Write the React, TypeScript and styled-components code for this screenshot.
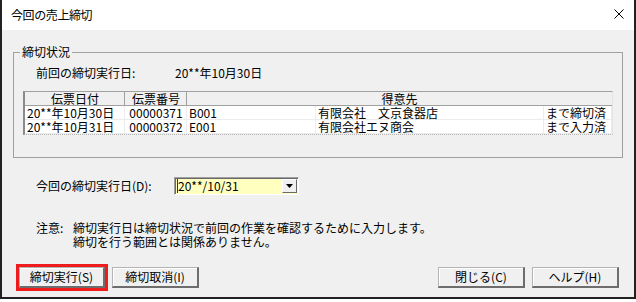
import styled, { createGlobalStyle } from "styled-components";

const GlobalStyle = createGlobalStyle`
  html, body {
    margin: 0;
    padding: 0;
    background: #ffffff;
  }
  body {
    font-family: "Noto Sans CJK JP", "Noto Sans", sans-serif;
    font-size: 12px;
    color: #000000;
  }
`;

const Window = styled.div`
  width: 636px;
  height: 299px;
  box-sizing: border-box;
  border-left: 2px solid #222222;
  border-right: 2px solid #222222;
  border-bottom: 2px solid #222222;
  background: #f0f0f0;
  display: flex;
  flex-direction: column;
`;

const TitleBar = styled.div`
  height: 30px;
  flex: none;
  background: #ffffff;
  display: flex;
  align-items: center;
  justify-content: space-between;
  padding: 0 10px 0 9px;
`;

const Title = styled.div`
  font-size: 12px;
  line-height: 14px;
  letter-spacing: -0.4px;
`;

const CloseBtn = styled.div`
  width: 10px;
  height: 10px;
  margin-top: -2px;
  display: flex;
`;

const Content = styled.div`
  flex: 1;
  display: flex;
  flex-direction: column;
  padding: 22px 11px 0 11px;
`;

const GroupBox = styled.div`
  position: relative;
  height: 106px;
  box-sizing: border-box;
  border: 1px solid #a0a0a0;
  padding: 13px 0 0 9px;
`;

const Legend = styled.div`
  position: absolute;
  top: -8px;
  left: 6px;
  padding: 0 2px;
  background: #f0f0f0;
  line-height: 14px;
`;

const InfoRow = styled.div`
  display: flex;
  line-height: 14px;
  margin-left: 13px;
`;

const InfoLabel = styled.div`
  width: 139px;
`;

const TableWrap = styled.div`
  margin-top: 11px;
  width: 590px;
  box-sizing: border-box;
  border-top: 1px solid #a0a0a0;
  border-left: 2px solid #8a8a8a;
  border-right: 1px solid #e3e3e3;
  border-bottom: 1px dotted #b4b4b4;
`;

const Table = styled.table`
  width: 100%;
  border-collapse: collapse;
  table-layout: fixed;
`;

const HeadCell = styled.th<{ $last?: boolean }>`
  font-weight: normal;
  height: 14px;
  padding: 0;
  line-height: 14px;
  background: #f0f0f0;
  box-shadow: ${({ $last }) =>
    $last ? "inset 0 -1px 0 #a0a0a0" : "inset -1px -1px 0 #a0a0a0"};
  text-align: center;
  white-space: nowrap;
`;

const Cell = styled.td<{ $align?: string }>`
  height: 14px;
  padding: 0 2px;
  line-height: 14px;
  background: #ffffff;
  box-shadow: inset -1px -1px 0 #ececec;
  text-align: ${({ $align }) => $align || "left"};
  white-space: nowrap;
`;

const ComboRow = styled.div`
  display: flex;
  align-items: center;
  margin-top: 19px;
  margin-left: 23px;
  height: 18px;
`;

const ComboLabel = styled.div`
  width: 138px;
  line-height: 14px;
`;

const Combo = styled.div`
  width: 125px;
  height: 18px;
  box-sizing: border-box;
  border-top: 1px solid #a0a0a0;
  border-left: 1px solid #a0a0a0;
  border-right: 1px solid #ffffff;
  border-bottom: 1px solid #ffffff;
  box-shadow: inset 1px 1px 0 #696969;
  background: #ffffc0;
  display: flex;
  align-items: center;
  padding: 0 1px 0 2px;
`;

const ComboText = styled.div`
  flex: 1;
  line-height: 14px;
  border-left: 1px solid #1c2f8c;
`;

const DropButton = styled.div`
  width: 15px;
  height: 14px;
  box-sizing: border-box;
  background: #f0f0f0;
  border-top: 1px solid #ffffff;
  border-left: 1px solid #ffffff;
  border-right: 1px solid #696969;
  border-bottom: 1px solid #696969;
  display: flex;
  align-items: center;
  justify-content: center;
`;

const Note = styled.div`
  display: flex;
  margin-top: 26px;
  margin-left: 23px;
  line-height: 14px;
`;

const NoteLabel = styled.div`
  width: 37px;
`;

const ButtonRow = styled.div`
  display: flex;
  align-items: center;
  gap: 7px;
  margin-top: 18px;
  padding: 0 4px 0 6px;
`;

const Spacer = styled.div`
  flex: 1;
`;

const Button = styled.button<{ $width: number; $marked?: boolean }>`
  width: ${({ $width }) => $width}px;
  height: 21px;
  box-sizing: border-box;
  padding: 0;
  font-family: inherit;
  font-size: 12px;
  line-height: 14px;
  color: #000000;
  background: #f0f0f0;
  border-top: 1px solid #b4b4b4;
  border-left: 1px solid #b4b4b4;
  border-right: 2px solid #6d6d6d;
  border-bottom: 2px solid #6d6d6d;
  box-shadow: inset 1px 1px 0 #ffffff;
  outline: ${({ $marked }) => ($marked ? "3px solid #ee1c1c" : "none")};
`;

const rows = [
  { date: "20**年10月30日", no: "00000371", code: "B001", name: "有限会社　文京食器店", status: "まで締切済" },
  { date: "20**年10月31日", no: "00000372", code: "E001", name: "有限会社エヌ商会", status: "まで入力済" },
];

export default function App() {
  return (
    <>
      <GlobalStyle />
      <Window>
        <TitleBar>
          <Title>今回の売上締切</Title>
          <CloseBtn>
            <svg width="10" height="10" viewBox="0 0 10 10">
              <path d="M0.5 0.5 L9.5 9.5 M9.5 0.5 L0.5 9.5" stroke="#000" strokeWidth="1" />
            </svg>
          </CloseBtn>
        </TitleBar>
        <Content>
          <GroupBox>
            <Legend>締切状況</Legend>
            <InfoRow>
              <InfoLabel>前回の締切実行日:</InfoLabel>
              <div>20**年10月30日</div>
            </InfoRow>
            <TableWrap>
              <Table>
                <colgroup>
                  <col style={{ width: 100 }} />
                  <col style={{ width: 62 }} />
                  <col style={{ width: 129 }} />
                  <col style={{ width: 228 }} />
                  <col />
                </colgroup>
                <thead>
                  <tr>
                    <HeadCell>伝票日付</HeadCell>
                    <HeadCell>伝票番号</HeadCell>
                    <HeadCell colSpan={3} $last>
                      得意先
                    </HeadCell>
                  </tr>
                </thead>
                <tbody>
                  {rows.map((r) => (
                    <tr key={r.no}>
                      <Cell>{r.date}</Cell>
                      <Cell $align="center">{r.no}</Cell>
                      <Cell>{r.code}</Cell>
                      <Cell>{r.name}</Cell>
                      <Cell>{r.status}</Cell>
                    </tr>
                  ))}
                </tbody>
              </Table>
            </TableWrap>
          </GroupBox>

          <ComboRow>
            <ComboLabel>今回の締切実行日(D):</ComboLabel>
            <Combo>
              <ComboText>20**/10/31</ComboText>
              <DropButton>
                <svg width="7" height="4" viewBox="0 0 7 4">
                  <path d="M0 0 H7 L3.5 4 Z" fill="#000" />
                </svg>
              </DropButton>
            </Combo>
          </ComboRow>

          <Note>
            <NoteLabel>注意:</NoteLabel>
            <div>
              <div>締切実行日は締切状況で前回の作業を確認するために入力します。</div>
              <div>締切を行う範囲とは関係ありません。</div>
            </div>
          </Note>

          <ButtonRow>
            <Button $width={86} $marked>
              締切実行(S)
            </Button>
            <Button $width={87}>締切取消(I)</Button>
            <Spacer />
            <Button $width={87}>閉じる(C)</Button>
            <Button $width={87}>ヘルプ(H)</Button>
          </ButtonRow>
        </Content>
      </Window>
    </>
  );
}
